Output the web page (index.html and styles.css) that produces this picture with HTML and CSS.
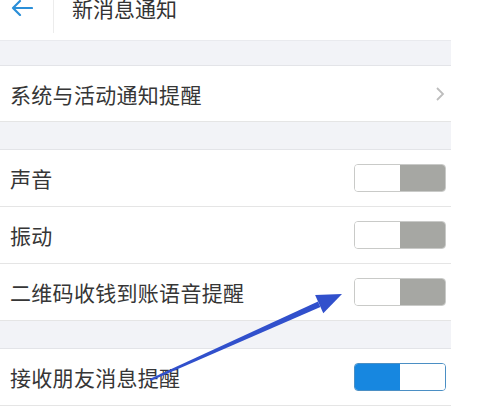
FILE: index.html
```html
<!DOCTYPE html>
<html lang="zh-CN">
<head>
    <meta charset="UTF-8">
    <meta name="viewport" content="width=device-width, initial-scale=1.0">
    <title>新消息通知</title>
    <link rel="stylesheet" href="styles.css">
</head>
<body>
    <div class="page">
        <header class="topbar">
            <svg class="back" width="22" height="16" viewBox="0 0 22 16">
                <path d="M21 8H2M9 1L2 8l7 7" fill="none" stroke="#2b8fd8" stroke-width="2.2" stroke-linecap="round" stroke-linejoin="round"/>
            </svg>
            <span class="sep"></span>
            <h1 class="title">新消息通知</h1>
        </header>

        <div class="gap first"></div>
        <div class="row short">
            <span class="label">系统与活动通知提醒</span>
            <svg class="chevron" width="10" height="16" viewBox="0 0 10 16">
                <path d="M2 2l6 6-6 6" fill="none" stroke="#bdbdbd" stroke-width="1.8"/>
            </svg>
        </div>

        <div class="gap"></div>
        <div class="row">
            <span class="label">声音</span>
            <span class="switch off"><span class="knob"></span><span class="track"></span></span>
        </div>
        <div class="row">
            <span class="label">振动</span>
            <span class="switch off"><span class="knob"></span><span class="track"></span></span>
        </div>
        <div class="row">
            <span class="label">二维码收钱到账语音提醒</span>
            <span class="switch off"><span class="knob"></span><span class="track"></span></span>
        </div>

        <div class="gap"></div>
        <div class="row">
            <span class="label">接收朋友消息提醒</span>
            <span class="switch on"><span class="track"></span><span class="knob"></span></span>
        </div>

        <!-- flecha de anotación -->
        <svg class="arrow" width="451" height="409" viewBox="0 0 451 409">
            <polygon points="150.4,380.9 149.6,379.1 318,301.5 320.4,306.9" fill="#3150cc"/>
            <polygon points="342,294 315.1,295.1 323.3,313.3" fill="#3150cc"/>
        </svg>
    </div>
</body>
</html>
```

FILE: styles.css
```css
body {
    margin: 0;
    background-color: #fff;
    font-family: "Noto Sans CJK SC", "Noto Sans", sans-serif;
    color: #333;
}

.page {
    position: relative;
    width: 451px;
}

.topbar {
    height: 40px;
    box-sizing: border-box;
    padding-bottom: 24px;
    display: flex;
    align-items: center;
}

.back {
    margin-left: 11px;
}

.sep {
    align-self: flex-start;
    width: 1px;
    height: 33px;
    margin-left: 20px;
    background-color: #ececec;
}

.title {
    margin: 0 0 0 18px;
    font-size: 21px;
    font-weight: normal;
    line-height: 21px;
    color: #333;
}

.gap {
    height: 27px;
    background-color: #f2f3f7;
    border-bottom: 1px solid #e3e4e8;
}

.gap.first {
    height: 24px;
    border-top: 1px solid #e9eaee;
}

.row {
    height: 56px;
    display: flex;
    align-items: center;
    justify-content: space-between;
    padding: 0 5px 0 10px;
    border-bottom: 1px solid #e5e5e5;
}

.row.short {
    height: 55px;
}

.label {
    font-size: 21px;
    line-height: 22px;
    letter-spacing: 0.3px;
    color: #363636;
}

.chevron {
    margin-right: 1px;
}

.switch {
    display: flex;
    width: 92px;
    height: 28px;
    box-sizing: border-box;
    border: 1px solid #c9cac8;
    border-radius: 4px;
    overflow: hidden;
}

.switch .knob {
    flex: 1;
    background-color: #fff;
}

.switch.off .track {
    flex: 1;
    background-color: #a6a7a3;
}

.switch.on {
    border-color: #4b8fc4;
}

.switch.on .track {
    flex: 1;
    background-color: #1787e0;
}

.arrow {
    position: absolute;
    left: 0;
    top: 0;
    pointer-events: none;
}
```
